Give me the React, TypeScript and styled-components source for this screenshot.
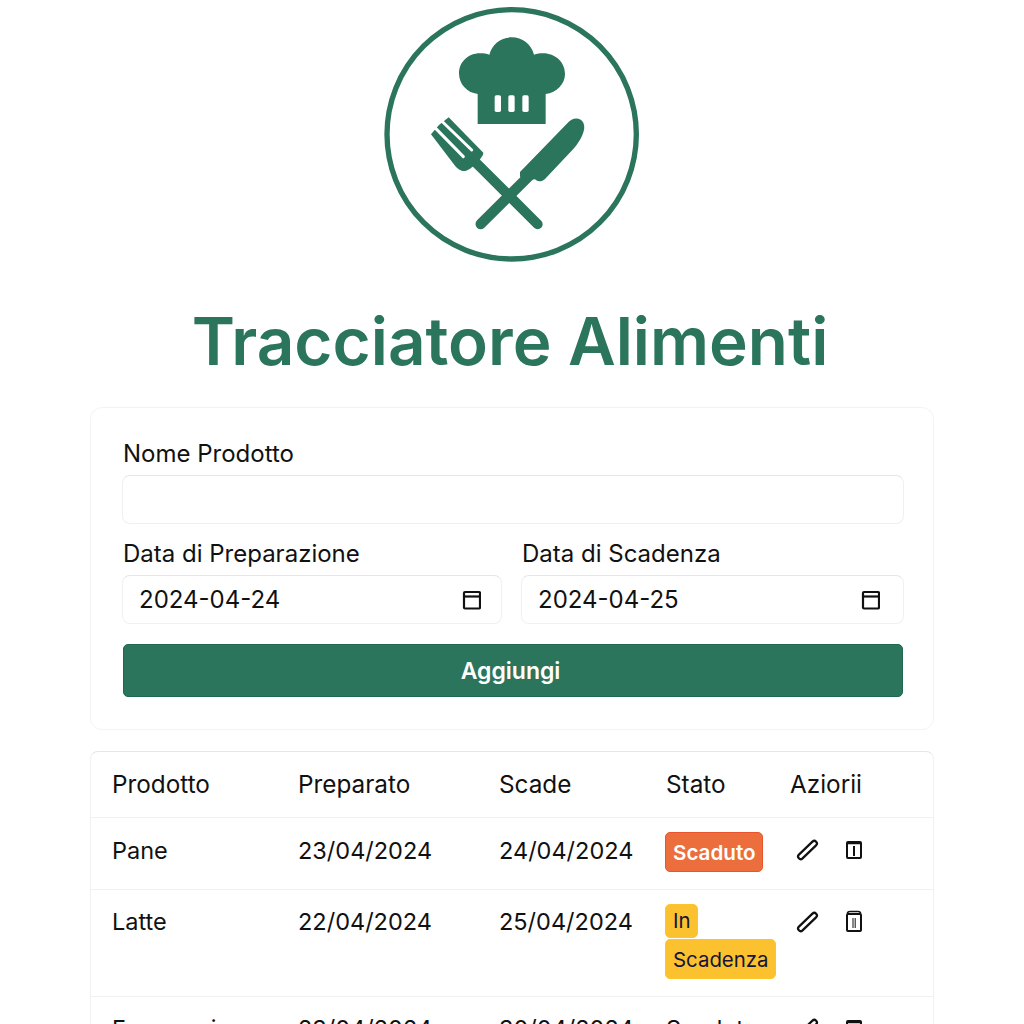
import * as React from 'react'
import styled, { createGlobalStyle } from 'styled-components'

const GREEN = '#2a755c'

const GlobalStyle = createGlobalStyle`
  html, body {
    margin: 0;
    background: #fff;
    overflow: hidden;
  }
  body {
    font-family: Inter, "Liberation Sans", sans-serif;
    color: #111;
  }
`

const Page = styled.main`
  width: 1024px;
  height: 1024px;
  overflow: hidden;
  box-sizing: border-box;
  padding: 0 90px;
`

const LogoWrap = styled.div`
  display: flex;
  justify-content: center;
  height: 270px;
`

const Title = styled.h1`
  margin: 29px 0 0;
  padding-right: 4px;
  height: 108px;
  text-align: center;
  font-size: 65.6px;
  line-height: 84px;
  font-weight: 600;
  color: ${GREEN};
  white-space: nowrap;
`

const Card = styled.section`
  box-sizing: border-box;
  height: 323px;
  padding: 30px 29px 0 31px;
  border: 1px solid #f3f3f1;
  border-radius: 12px;
  display: flex;
  flex-direction: column;
`

const Label = styled.label`
  display: block;
  font-size: 24px;
  line-height: 32px;
  height: 37px;
  padding-left: 1px;
`

const Field = styled.div<{ $inset?: number }>`
  box-sizing: border-box;
  height: 49px;
  display: flex;
  align-items: center;
  justify-content: space-between;
  padding: 0 ${p => p.$inset || 20}px 0 16px;
  border: 1px solid #f0f0ee;
  border-top-color: #e6e6e3;
  border-radius: 8px;
  font-size: 24px;
  background: #fff;
`

const DateRow = styled.div`
  display: grid;
  grid-template-columns: 380px 383px;
  column-gap: 19px;
  margin-top: 14px;
`

const Submit = styled.button`
  margin: 20px 0 0 1px;
  padding: 0 5px 0 0;
  width: 780px;
  height: 53px;
  border: 1px solid #1f6850;
  border-radius: 5px;
  background: ${GREEN};
  color: #fff;
  font: 600 23px Inter, sans-serif;
`

const TableCard = styled.section`
  margin-top: 21px;
  border: 1px solid #f1f1ef;
  border-top-color: #e6e6e4;
  border-radius: 8px 8px 0 0;
`

const Table = styled.table`
  width: 100%;
  table-layout: fixed;
  border-collapse: collapse;
  font-size: 23.5px;
`

const Th = styled.th<{ $w: number }>`
  width: ${p => p.$w}px;
  height: 65px;
  padding: 0 0 0 21px;
  box-sizing: border-box;
  text-align: left;
  font-size: 24.3px;
  font-weight: 400;
`

const Row = styled.tr`
  border-top: 1px solid #f1f1ef;
`

const Td = styled.td<{ $h?: number; $top?: number }>`
  height: ${p => p.$h || 72}px;
  padding: ${p => p.$top || 14}px 0 0 21px;
  box-sizing: border-box;
  vertical-align: top;
  line-height: 36px;
  white-space: nowrap;
`

const Badges = styled.div`
  display: flex;
  flex-direction: column;
  align-items: flex-start;
  gap: 1px;
  margin-left: -1px;
`

const Badge = styled.span<{ $tone: 'late' | 'soon'; $short?: boolean }>`
  box-sizing: border-box;
  height: ${p => (p.$short ? 34 : 40)}px;
  padding: ${p => (p.$short ? 0 : 2)}px 6px 0 7px;
  display: inline-flex;
  align-items: center;
  border-radius: 5px;
  font-size: ${p => (p.$tone === 'late' ? 20.6 : 20.4)}px;
  font-weight: ${p => (p.$tone === 'late' ? 600 : 400)};
  color: ${p => (p.$tone === 'late' ? '#fff' : '#14143a')};
  background: ${p => (p.$tone === 'late' ? '#ec6e3c' : '#fcc12f')};
  border: 1px solid ${p => (p.$tone === 'late' ? '#e8552c' : '#fcc42d')};
`

const Actions = styled.div`
  display: flex;
  align-items: center;
  gap: 25px;
  padding-left: 5px;
  height: 36px;
`

const CalendarIcon = () => (
  <svg width="20" height="20" viewBox="0 0 20 20" fill="none" stroke="#111">
    <rect x="3" y="2" width="16" height="16.5" rx="1" strokeWidth="2.2" />
    <path d="M3 6.5h16" strokeWidth="2.2" />
  </svg>
)

const PencilIcon = () => (
  <svg width="24" height="24" viewBox="0 0 24 24" fill="none" stroke="#111" strokeWidth="2.2">
    <rect x="-12" y="-2.6" width="24" height="5.2" rx="2.6" transform="translate(12.5 12) rotate(-44)" />
  </svg>
)

const TrashIcon = ({ tall }: { tall?: boolean }) => (
  <svg width="20" height="24" viewBox="0 0 20 24" fill="none" stroke="#111">
    {tall ? (
      <>
        <path d="M3.5 3.5Q3.5 1.5 6 1.5H14Q16.5 1.5 16.5 3.5" strokeWidth="1.6" />
        <rect x="3" y="4" width="14" height="17" rx="1" strokeWidth="2" />
        <path d="M9 8v10M11.2 8v10" strokeWidth="1" />
      </>
    ) : (
      <>
        <rect x="3" y="4" width="14" height="16" rx="1" strokeWidth="2" />
        <path d="M3 5.5h14" strokeWidth="1.5" />
        <path d="M10 8v10" strokeWidth="2" />
      </>
    )}
  </svg>
)

const Logo = () => (
  <svg width="280" height="270" viewBox="6 0 840 810">
    <circle cx="425" cy="403" r="374" fill="none" stroke={GREEN} strokeWidth="16" />
    <path
      fill={GREEN}
      d="M323 372V282C290 278 267 252 267 220C267 186 295 160 330 160C340 160 350 161 358 164C366 132 394 112 425 112C457 112 484 132 492 164C500 161 510 160 520 160C555 160 585 186 585 222C585 252 560 278 527 282V372Z"
    />
    <g fill="#fff">
      <rect x="374" y="286" width="19" height="50" rx="5" />
      <rect x="415" y="286" width="19" height="50" rx="5" />
      <rect x="457" y="286" width="19" height="50" rx="5" />
    </g>
    <g stroke={GREEN} strokeLinecap="round" fill="none">
      <path d="M503 673L300 470" strokeWidth="30" />
      <path d="M332 672L480 525" strokeWidth="31" />
    </g>
    <path
      fill={GREEN}
      d="M183 403L192 392L207 375L236 352L340 458C342 470 300 512 285 513C270 513 262 505 255 497Z"
    />
    <g stroke="#fff" strokeWidth="9" strokeLinecap="round">
      <path d="M194 382L280 470" />
      <path d="M215 363L305 450" />
    </g>
    <path
      fill={GREEN}
      d="M450 516L592 370C606 352 630 350 640 368C650 388 632 420 612 445L525 537C515 546 503 546 495 538L478 540L450 530Z"
    />
  </svg>
)

export default function App() {
  return (
    <Page>
      <GlobalStyle />
      <LogoWrap>
        <Logo />
      </LogoWrap>
      <Title>Tracciatore Alimenti</Title>

      <Card>
        <Label>Nome Prodotto</Label>
        <Field />
        <DateRow>
          <div>
            <Label>Data di Preparazione</Label>
            <Field>
              2024-04-24
              <CalendarIcon />
            </Field>
          </div>
          <div>
            <Label>Data di Scadenza</Label>
            <Field $inset={23}>
              2024-04-25
              <CalendarIcon />
            </Field>
          </div>
        </DateRow>
        <Submit>Aggiungi</Submit>
      </Card>

      <TableCard>
        <Table>
          <thead>
            <tr>
              <Th $w={186}>Prodotto</Th>
              <Th $w={201}>Preparato</Th>
              <Th $w={167}>Scade</Th>
              <Th $w={124}>Stato</Th>
              <Th $w={164}>Aziorii</Th>
            </tr>
          </thead>
          <tbody>
            <Row>
              <Td $top={15}>Pane</Td>
              <Td $top={15}>23/04/2024</Td>
              <Td $top={15}>24/04/2024</Td>
              <Td>
                <Badges>
                  <Badge $tone="late">Scaduto</Badge>
                </Badges>
              </Td>
              <Td>
                <Actions>
                  <PencilIcon />
                  <TrashIcon />
                </Actions>
              </Td>
            </Row>
            <Row>
              <Td $h={107}>Latte</Td>
              <Td>22/04/2024</Td>
              <Td>25/04/2024</Td>
              <Td>
                <Badges>
                  <Badge $tone="soon" $short>
                    In
                  </Badge>
                  <Badge $tone="soon">Scadenza</Badge>
                </Badges>
              </Td>
              <Td>
                <Actions>
                  <PencilIcon />
                  <TrashIcon tall />
                </Actions>
              </Td>
            </Row>
            <Row>
              <Td>Formaggi</Td>
              <Td>23/04/2024</Td>
              <Td>30/04/2024</Td>
              <Td>Scaduto</Td>
              <Td>
                <Actions>
                  <PencilIcon />
                  <TrashIcon />
                </Actions>
              </Td>
            </Row>
          </tbody>
        </Table>
      </TableCard>
    </Page>
  )
}
